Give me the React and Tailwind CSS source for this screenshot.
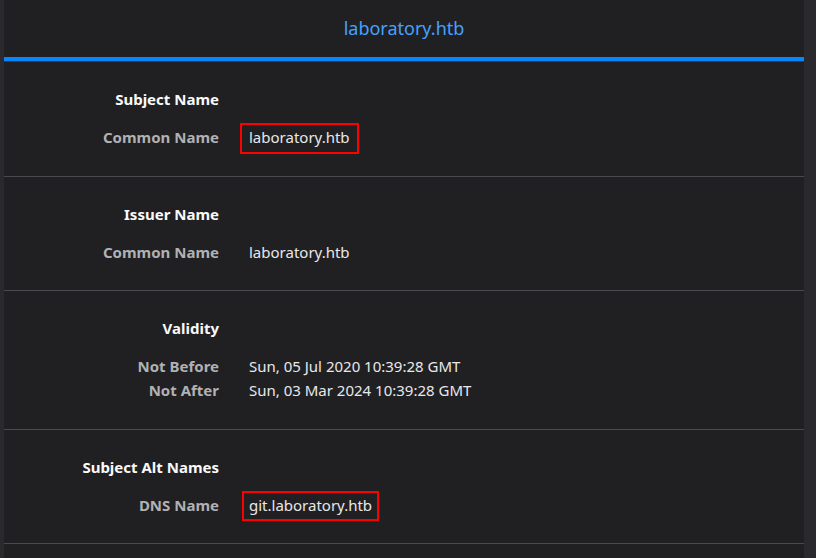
import React from "react";

const sections = [
  {
    title: "Subject Name",
    pad: "pt-[27px] pb-[27px]",
    rows: [
      {
        label: "Common Name",
        value: "laboratory.htb",
        box: "-left-[9px] -right-[9px] -top-[3px] -bottom-[6px]",
      },
    ],
  },
  {
    title: "Issuer Name",
    pad: "pt-[27px] pb-[26px]",
    rows: [{ label: "Common Name", value: "laboratory.htb" }],
  },
  {
    title: "Validity",
    pad: "pt-[27px] pb-[27px]",
    rows: [
      { label: "Not Before", value: "Sun, 05 Jul 2020 10:39:28 GMT" },
      { label: "Not After", value: "Sun, 03 Mar 2024 10:39:28 GMT" },
    ],
  },
  {
    title: "Subject Alt Names",
    pad: "pt-[27px] pb-[26px]",
    rows: [
      {
        label: "DNS Name",
        value: "git.laboratory.htb",
        box: "-left-[7px] -right-[7px] -top-[3px] -bottom-[5px]",
      },
    ],
  },
];

const Row = ({ label, value, box }) => (
  <div className="flex h-6 items-center">
    <span className="w-[215px] shrink-0 text-right font-bold text-[#b1b1b3]">
      {label}
    </span>
    <span className="relative ml-[30px] text-[#e8e8ea]">
      {value}
      {box && (
        <span className={`absolute border-2 border-[#ff0000] ${box}`} />
      )}
    </span>
  </div>
);

const App = () => {
  return (
    <div className="flex h-[558px] w-[816px] bg-[#2a2a2e] font-['Noto_Sans',sans-serif] text-[15px] overflow-hidden">
      <main className="ml-[4px] w-[800px] bg-[#202023]">
        <header className="flex h-[57px] items-center justify-center pb-[1px] text-[18px] text-[#45a1ff]">
          laboratory.htb
        </header>
        <div className="h-[4px] bg-[#0a84ff]" />
        <div className="h-[1px] bg-[#38383d]" />
        {sections.map((section) => (
          <section
            key={section.title}
            className={`border-b border-[#4a4a4f] ${section.pad}`}
          >
            <div className="flex h-5 items-center">
              <span className="w-[215px] text-right font-bold text-[#f9f9fa]">
                {section.title}
              </span>
            </div>
            <div className="mt-[16px] flex flex-col">
              {section.rows.map((row) => (
                <Row key={row.label} {...row} />
              ))}
            </div>
          </section>
        ))}
      </main>
    </div>
  );
};

export default App;
